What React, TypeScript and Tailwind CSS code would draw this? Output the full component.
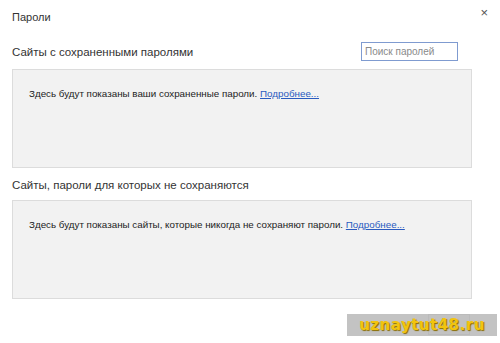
import React from 'react';

function Panel({ text }: { text: string }) {
  return (
    <div className="h-[99px] w-[460px] border border-[#dcdcdc] bg-[#f2f2f2] px-[16px] pt-[17px] font-['Liberation_Sans',sans-serif] text-[9.8px] leading-[13px] text-[#222]">
      {text}{' '}
      <a href="#" className="text-[#2a5bc0] underline">
        Подробнее...
      </a>
    </div>
  );
}

export default function App() {
  return (
    <div className="relative h-[343px] w-[500px] overflow-hidden bg-white font-['Liberation_Sans',sans-serif] text-[#333]">
      <div className="flex items-start justify-between pl-[12px] pr-[12px] pt-[9px]">
        <p className="text-[11px] leading-[16px]">Пароли</p>
        <span className="-mt-[3px] text-[13px] leading-[14px] text-[#555]">×</span>
      </div>
      <div className="mt-[17px] flex items-center justify-between pl-[12px] pr-[42px]">
        <p className="text-[11.5px] leading-[18px]">Сайты с сохраненными паролями</p>
        <input
          placeholder="Поиск паролей"
          className="h-[19px] w-[97px] border border-[#7f9bd0] px-[3px] text-[10px] text-[#333] placeholder:text-[#8a8a8a] outline-none"
        />
      </div>
      <div className="mt-[8px] pl-[12px]">
        <Panel text="Здесь будут показаны ваши сохраненные пароли." />
      </div>
      <p className="mt-[8px] pl-[12px] text-[11.5px] leading-[18px]">
        Сайты, пароли для которых не сохраняются
      </p>
      <div className="mt-[6px] pl-[12px]">
        <Panel text="Здесь будут показаны сайты, которые никогда не сохраняют пароли." />
      </div>
      <div className="mt-[15px] flex justify-end pr-[30px]">
        <div className="h-[21px] w-[42px] border border-[#aaa] bg-[#eee]" />
      </div>
      <div className="absolute bottom-[7px] right-[3px] flex h-[22px] w-[150px] items-center justify-center bg-[#bdbdbd]/90 font-['DejaVu_Sans',sans-serif] text-[15px] font-bold tracking-[0.5px] text-[#f2c40f] [text-shadow:1px_1px_1px_#8a6d00]">
        uznaytut48.ru
      </div>
    </div>
  );
}
